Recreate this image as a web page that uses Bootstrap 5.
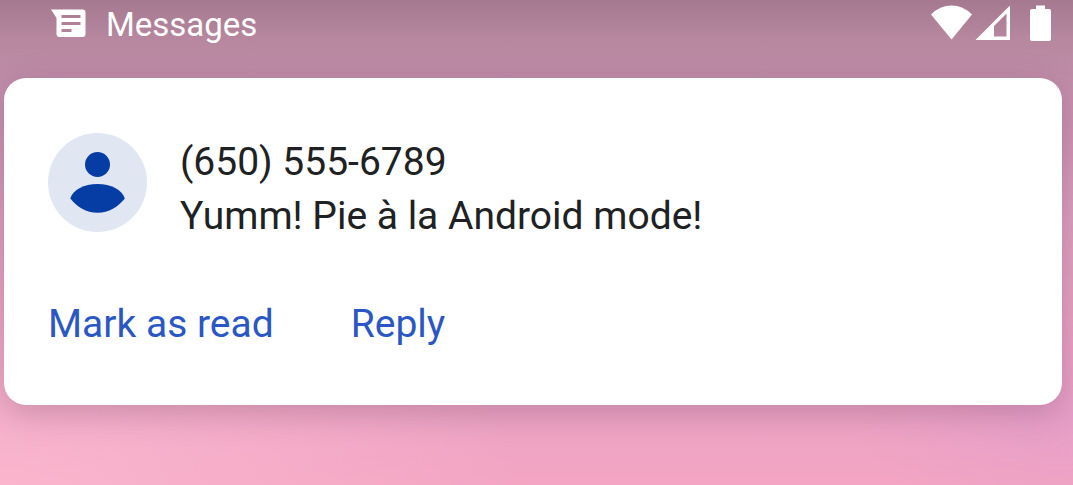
<!DOCTYPE html>
<html lang="en">
<head>
<meta charset="utf-8">
<meta name="viewport" content="width=device-width, initial-scale=1">
<title>Messages</title>
<link rel="stylesheet" href="https://cdn.jsdelivr.net/npm/bootstrap@5.3.0/dist/css/bootstrap.min.css">
<style>
  body {
    font-family: Roboto, "Liberation Sans", sans-serif;
    color: #202122;
    background:
      radial-gradient(ellipse 220px 110px at 100% 86%, rgba(228, 157, 202, .7), rgba(228, 157, 202, 0)),
      radial-gradient(ellipse 520px 240px at 0 100%, rgba(252, 186, 208, .8), rgba(252, 186, 208, 0)),
      linear-gradient(to bottom, #a5798f 0, #b6879f 38px, #c38fac 90px, #dca0bf 220px, #e8a2c2 330px, #eea4c5 420px, #f3a5c2 100%);
  }
  .status-bar { height: 78px; padding: 0 20px 0 48px; }
  .status-row { height: 48px; }
  .app-name { font-size: 33px; line-height: 50px; padding-top: 2px; }
  .notice {
    margin: 0 11px 0 4px;
    padding: 55px 44px 54px;
    border-radius: 22px;
    box-shadow: 0 8px 32px rgba(80, 40, 65, .26);
  }
  .avatar { width: 99px; height: 99px; }
  .notice-text { font-size: 39px; line-height: 54px; padding-top: 2px; }
  .sender-gap { gap: 33px; }
  .action-gap { gap: 77px; margin-top: 54px; }
  .action { font-size: 39px; line-height: 54px; color: #2b57c4; }
  .action:hover { color: #153e9f; }
</style>
</head>
<body class="min-vh-100">
<header class="status-bar text-white">
  <div class="status-row d-flex align-items-center justify-content-between">
    <div class="d-flex align-items-center">
      <svg class="flex-shrink-0 me-3" width="42" height="48" viewBox="0 0 42 48" aria-hidden="true">
        <path fill="#fff" fill-rule="evenodd" d="M3 9.500H34.500Q37.500 9.500 37.500 12.500V34Q37.500 37 34.500 37H11.500Q8.500 37 8.500 34V18ZM13.500 15V18H32.500V15ZM13.500 22V25H32.500V22ZM13.500 29V32H23.500V29Z"/>
      </svg>
      <span class="app-name">Messages</span>
    </div>
    <svg class="flex-shrink-0" width="123" height="48" viewBox="930 0 123 48" role="img" aria-label="Wi-Fi, mobile signal and battery">
      <g fill="#fff">
        <path d="M931 14.500Q940 5.500 951.500 5.500T972 14.500L951.500 39.500Z"/>
        <path fill-rule="evenodd" d="M975.500 40L1010 5.500V40ZM994 26V36.500H1006.500V13.500Z"/>
        <path d="M1036 5.500H1045V9H1049Q1051 9 1051 11V39Q1051 41 1049 41H1032Q1030 41 1030 39V11Q1030 9 1032 9H1036Z"/>
      </g>
    </svg>
  </div>
</header>
<main class="notice bg-white">
  <div class="d-flex sender-gap">
    <svg class="avatar flex-shrink-0" viewBox="0 0 99 99" aria-hidden="true">
      <circle cx="49.500" cy="49.500" r="49.500" fill="#e0e6f2"/>
      <g fill="#063da5">
        <circle cx="49.500" cy="31.500" r="12.500"/>
        <path d="M22.300 65.500C25 56.500 36 51 49.500 51S74 56.500 76.800 65.500C70 74 61 79.800 49.500 79.800S29 74 22.300 65.500Z"/>
      </g>
    </svg>
    <div class="notice-text">
      <div>(650) 555-6789</div>
      <div>Yumm! Pie à la Android mode!</div>
    </div>
  </div>
  <div class="d-flex flex-wrap action-gap">
    <button type="button" class="btn p-0 border-0 action">Mark as read</button>
    <button type="button" class="btn p-0 border-0 action">Reply</button>
  </div>
</main>
<script src="https://cdn.jsdelivr.net/npm/bootstrap@5.3.0/dist/js/bootstrap.bundle.min.js"></script>
</body>
</html>
